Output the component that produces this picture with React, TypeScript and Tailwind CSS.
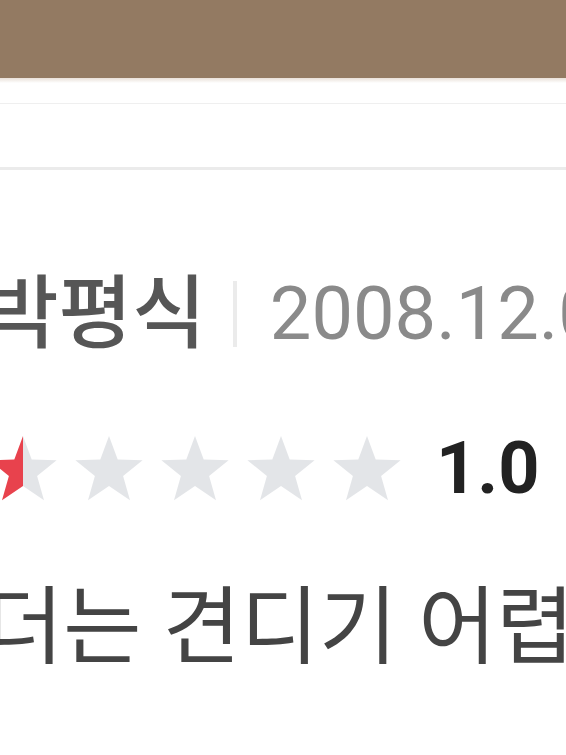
const FONT = "font-['Roboto','Noto_Sans_CJK_KR',sans-serif]"

function Star({ fill = 0 }: { fill?: number }) {
  // fill: 0..1 share of the star painted red from the left
  const id = `half-${fill}`
  return (
    <svg width="72" height="70" viewBox="0 0 24 23" className="shrink-0">
      <defs>
        <linearGradient id={id} x1="0" x2="1" y1="0" y2="0">
          <stop offset={fill} stopColor="#e8424d" />
          <stop offset={fill} stopColor="#e3e5e8" />
        </linearGradient>
      </defs>
      <polygon
        points="12,0.5 14.9,8.3 23.2,8.6 16.7,13.8 19,21.9 12,17.2 5,21.9 7.3,13.8 0.8,8.6 9.1,8.3"
        fill={`url(#${id})`}
      />
    </svg>
  )
}

export default function App() {
  return (
    <div className={`w-[566px] h-[755px] bg-white overflow-hidden ${FONT}`}>
      <div className="h-[78px] bg-[#937a62]" />
      <div className="h-[26px] bg-gradient-to-b from-[#e9e0d8] via-white via-[20%] to-white border-b border-[#efefef]" />
      <div className="h-[66px] border-b-[3px] border-[#ebebeb]" />

      <div className="flex flex-col">
        <div className="-ml-[15px] mt-[104px] flex items-center h-[80px] leading-none whitespace-nowrap">
          <span className="shrink-0 text-[80px] text-[#565656] font-medium">박평식</span>
          <div className="shrink-0 ml-[27px] mr-[33px] w-[4px] h-[66px] bg-[#ebebeb]" />
          <span className="shrink-0 text-[74px] text-[#8a8a8a]">2008.12.09</span>
        </div>

        <div className="-ml-[13px] mt-[80px] flex items-center h-[70px] whitespace-nowrap">
          <div className="flex gap-[14px] shrink-0">
            <Star fill={0.5} />
            <Star />
            <Star />
            <Star />
            <Star />
          </div>
          <span className="shrink-0 ml-[33px] text-[72px] font-bold leading-none text-[#222]">1.0</span>
        </div>

        <p className="-ml-[15px] mt-[82px] text-[85px] leading-none text-[#444] whitespace-nowrap">
          더는 견디기 어렵다
        </p>
      </div>
    </div>
  )
}
